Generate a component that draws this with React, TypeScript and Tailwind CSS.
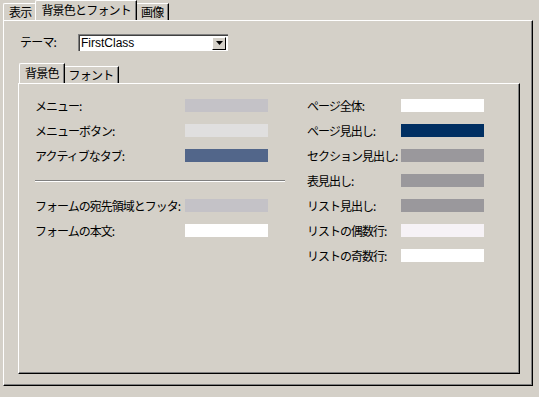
import React from "react";

const font = { fontFamily: '"MS UI Gothic", "Noto Sans CJK JP", sans-serif' };

type Swatch = { label: string; color: string };

const leftTop: Swatch[] = [
  { label: "メニュー:", color: "bg-[#c4c2c7]" },
  { label: "メニューボタン:", color: "bg-[#e0dfdf]" },
  { label: "アクティブなタブ:", color: "bg-[#52668a]" },
];

const leftBottom: Swatch[] = [
  { label: "フォームの宛先領域とフッタ:", color: "bg-[#c4c2c7]" },
  { label: "フォームの本文:", color: "bg-white" },
];

const right: Swatch[] = [
  { label: "ページ全体:", color: "bg-white" },
  { label: "ページ見出し:", color: "bg-[#002f62]" },
  { label: "セクション見出し:", color: "bg-[#9a989c]" },
  { label: "表見出し:", color: "bg-[#9a989c]" },
  { label: "リスト見出し:", color: "bg-[#9a989c]" },
  { label: "リストの偶数行:", color: "bg-[#f6f2f6]" },
  { label: "リストの奇数行:", color: "bg-white" },
];

function Row({ item, labelW }: { item: Swatch; labelW: string }) {
  return (
    <div className="flex h-[25px] items-center">
      <span className={`${labelW} shrink-0 whitespace-nowrap text-[12px] leading-[14px] tracking-[-1px] text-black`}>
        {item.label}
      </span>
      <div className={`h-[13px] w-[83px] ${item.color}`} />
    </div>
  );
}

function Tab({ label, active }: { label: string; active?: boolean }) {
  return (
    <div
      className={`relative whitespace-nowrap rounded-tl-[2px] border-l border-t border-r border-white border-r-black px-[5px] text-[12px] leading-[14px] tracking-[-0.8px] text-black shadow-[inset_-1px_0_0_#808080] ${
        active ? "z-10 -mx-[2px] h-[20px] bg-[#d4d0c8] pt-[2px]" : "h-[17px] pt-[1px]"
      }`}
    >
      {label}
    </div>
  );
}

export default function App() {
  return (
    <div className="h-[397px] w-[539px] bg-[#d4d0c8]" style={font}>
      <div className="flex items-end pl-[3px]">
        <Tab label="表示" />
        <Tab label="背景色とフォント" active />
        <Tab label="画像" />
      </div>
      <div className="ml-[3px] h-[366px] w-[530px] border-l border-t border-r border-b border-white border-r-black border-b-black shadow-[inset_-1px_-1px_0_#808080]">
        <div className="flex h-[30px] items-end pl-[16px] text-[12px] leading-[14px]">
          <span className="w-[58px] pb-[2px] tracking-[-0.8px]">テーマ:</span>
          <div className="flex h-[17px] w-[150px] items-center justify-between bg-white pl-[3px] pr-[2px] shadow-[inset_1px_1px_0_#808080,inset_2px_2px_0_#404040]">
            <span className="pt-[1px] text-[12px]" style={{ fontFamily: '"Liberation Sans", sans-serif' }}>
              FirstClass
            </span>
            <div className="mt-[1px] flex h-[13px] w-[14px] items-center justify-center border-l border-t border-r border-b border-white border-r-black border-b-black bg-[#d4d0c8]">
              <svg width="7" height="4" viewBox="0 0 7 4">
                <polygon points="0,0 7,0 3.5,4" fill="black" />
              </svg>
            </div>
          </div>
        </div>
        <div className="flex items-end pl-[17px] pt-[12px]">
          <Tab label="背景色" active />
          <Tab label="フォント" />
        </div>
        <div className="ml-[14px] flex h-[291px] w-[502px] border-l border-t border-r border-b border-white border-r-black border-b-black pl-[16px] pt-[9px] shadow-[inset_-1px_-1px_0_#808080]">
          <div className="w-[250px]">
            {leftTop.map((s) => (
              <Row key={s.label} item={s} labelW="w-[150px]" />
            ))}
            <div className="mb-[11px] mt-[12px] h-[2px] border-t border-b border-[#808080] border-b-white" />
            {leftBottom.map((s) => (
              <Row key={s.label} item={s} labelW="w-[150px]" />
            ))}
          </div>
          <div className="ml-[22px]">
            {right.map((s) => (
              <Row key={s.label} item={s} labelW="w-[94px]" />
            ))}
          </div>
        </div>
      </div>
    </div>
  );
}
